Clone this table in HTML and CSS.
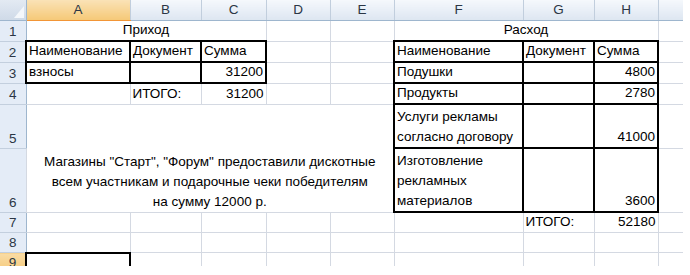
FILE: index.html
```
<!DOCTYPE html>
<html lang="ru">
<head>
<meta charset="utf-8">
<title>Приход и расход</title>
<link rel="stylesheet" href="styles.css">
</head>
<body>
<div class="sheet">
<table class="grid">
<colgroup>
<col class="w-rh"><col class="w-a"><col class="w-b"><col class="w-c"><col class="w-d"><col class="w-e"><col class="w-f"><col class="w-g"><col class="w-h"><col class="w-i">
</colgroup>
<tr class="h-hdr">
<th class="corner"><svg class="tri" width="10" height="12" viewBox="0 0 10 12"><polygon points="10,0 10,12 0,12" fill="#f4f7fb"/></svg></th>
<th class="ch sel">A</th><th class="ch">B</th><th class="ch">C</th><th class="ch">D</th><th class="ch">E</th><th class="ch">F</th><th class="ch">G</th><th class="ch">H</th><th class="ch last"></th>
</tr>
<tr class="h-r">
<th class="rh">1</th>
<td colspan="3" class="ctr">Приход</td><td></td><td></td>
<td colspan="3" class="ctr">Расход</td><td></td>
</tr>
<tr class="h-r">
<th class="rh">2</th>
<td class="tk">Наименование</td><td class="tk">Документ</td><td class="tk">Сумма</td><td></td><td></td>
<td class="tk">Наименование</td><td class="tk">Документ</td><td class="tk">Сумма</td><td></td>
</tr>
<tr class="h-r">
<th class="rh">3</th>
<td class="tk">взносы</td><td class="tk"></td><td class="tk num">31200</td><td></td><td></td>
<td class="tk">Подушки</td><td class="tk"></td><td class="tk num">4800</td><td></td>
</tr>
<tr class="h-r">
<th class="rh">4</th>
<td></td><td>ИТОГО:</td><td class="num">31200</td><td></td><td></td>
<td class="tk">Продукты</td><td class="tk"></td><td class="tk num">2780</td><td></td>
</tr>
<tr class="h-r5">
<th class="rh">5</th>
<td colspan="5" rowspan="2" class="ctr wrap">Магазины "Старт", "Форум" предоставили дискотные<br>всем участникам и подарочные чеки победителям<br>на сумму 12000 р.</td>
<td class="tk wrap">Услуги рекламы<br>согласно договору</td><td class="tk"></td><td class="tk num">41000</td><td></td>
</tr>
<tr class="h-r6">
<th class="rh">6</th>
<td class="tk wrap">Изготовление<br>рекламных<br>материалов</td><td class="tk"></td><td class="tk num">3600</td><td></td>
</tr>
<tr class="h-r7">
<th class="rh">7</th>
<td></td><td></td><td></td><td></td><td></td>
<td></td><td>ИТОГО:</td><td class="num">52180</td><td></td>
</tr>
<tr class="h-r7">
<th class="rh">8</th>
<td></td><td></td><td></td><td></td><td></td><td></td><td></td><td></td><td></td>
</tr>
<tr class="h-r7">
<th class="rh sel">9</th>
<td class="cur"></td><td></td><td></td><td></td><td></td><td></td><td></td><td></td><td></td>
</tr>
</table>
</div>
</body>
</html>
```
FILE: styles.css
```
html, body {
  margin: 0;
  padding: 0;
  background: #fff;
}
.sheet {
  width: 683px;
  height: 266px;
  overflow: hidden;
  background: #fff;
}
.grid {
  border-collapse: collapse;
  table-layout: fixed;
  width: 684px;
  font-family: "Liberation Sans", Arial, sans-serif;
  font-size: 13.5px;
  color: #000;
}
.w-rh { width: 26px; }
.w-a { width: 104px; }
.w-b { width: 71px; }
.w-c { width: 65px; }
.w-d { width: 64px; }
.w-e { width: 64px; }
.w-f { width: 129px; }
.w-g { width: 71px; }
.w-h { width: 64px; }
.w-i { width: 26px; }

.h-hdr { height: 20px; }
.h-r { height: 21px; }
.h-r5 { height: 44px; }
.h-r6 { height: 64px; }
.h-r7 { height: 20px; }

.grid td {
  border: 1px solid #d4d9e2;
  padding: 0 2px 1px 2px;
  vertical-align: bottom;
  line-height: 18px;
  white-space: nowrap;
  overflow: hidden;
}
.grid td.tk { border: 2px solid #000; }
.grid td.cur { border: 2px solid #000; }
.grid td.num { text-align: right; }
.grid td.ctr { text-align: center; }
.grid td.wrap {
  white-space: normal;
  line-height: 20px;
  padding-bottom: 0;
}

.grid th {
  font-weight: normal;
  padding: 0;
  color: #2b3645;
  font-size: 13.5px;
  line-height: 18px;
  text-align: center;
}
.corner {
  background: linear-gradient(#e3eaf3, #cfdae8);
  border-right: 1px solid #9eb6ce;
  border-bottom: 1px solid #9eb6ce;
  text-align: right;
  vertical-align: bottom;
  position: relative;
}
.tri {
  display: block;
  margin: 0 2px 2px auto;
}
.ch {
  background: linear-gradient(#f5f8fc, #dde6f1);
  border-right: 1px solid #c1cedd;
  border-bottom: 1px solid #9eb6ce;
  vertical-align: middle;
}
.ch.last { border-right: none; }
.rh {
  background: #e4ecf7;
  border-right: 1px solid #9eb6ce;
  border-bottom: 1px solid #c3cfde;
  vertical-align: bottom;
  padding-bottom: 1px;
}
.grid th.sel {
  background: linear-gradient(#fae2b6, #f5c978);
  border-bottom-color: #f29536;
}
.grid th.rh.sel {
  background: linear-gradient(#f9dca5, #f5c978);
}
```
